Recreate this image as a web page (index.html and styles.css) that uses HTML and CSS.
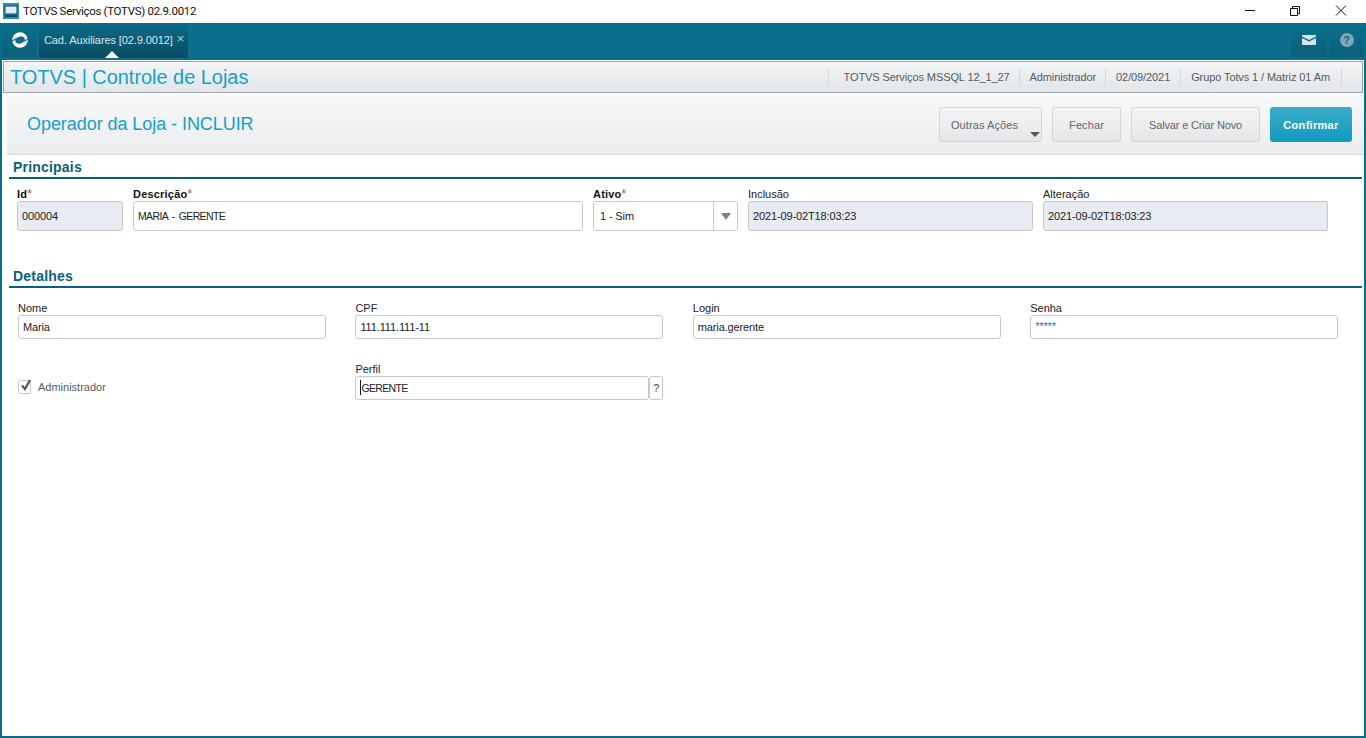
FILE: index.html
```html
<!DOCTYPE html>
<html lang="pt-BR">
<head>
<meta charset="utf-8">
<title>TOTVS Serviços (TOTVS) 02.9.0012</title>
<link rel="stylesheet" href="styles.css">
</head>
<body>
<header class="titlebar">
  <svg class="app-icon" width="16" height="16" viewBox="0 0 16 16"><rect width="16" height="16" fill="#2a8fb0"/><rect x="2" y="3" width="12" height="8" fill="#dfeef4" stroke="#0b4a60"/><rect x="2" y="12" width="12" height="2" fill="#0b4a60"/></svg>
  <span class="title-text">TOTVS Serviços (TOTVS) 02.9.0012</span>
  <div class="win-controls">
    <svg class="win-btn" width="46" height="23" viewBox="0 0 46 23"><path d="M18 10.5h10" stroke="#111" fill="none"/></svg>
    <svg class="win-btn" width="46" height="23" viewBox="0 0 46 23"><path d="M18.5 8.5h7v7h-7zM20.5 8.5v-2h7v7h-2" stroke="#111" fill="none"/></svg>
    <svg class="win-btn" width="46" height="23" viewBox="0 0 46 23"><path d="M18 5.5l10 10M28 5.5l-10 10" stroke="#111" fill="none"/></svg>
  </div>
</header>
<div class="shell">
  <nav class="topbar">
    <div class="logo-tab">
      <svg width="18" height="18" viewBox="0 0 18 18"><circle cx="9" cy="9" r="7.800" fill="#fff"/><ellipse cx="9" cy="9" rx="5" ry="3.500" transform="rotate(-22 9 9)" fill="#0b6f8c"/><path d="M1 10L5.500 7.500M17 8L12.500 10.500" stroke="#0b6f8c" stroke-width="1.100" fill="none"/></svg>
    </div>
    <div class="tab">
      <span class="tab-label">Cad. Auxiliares [02.9.0012]</span>
      <span class="tab-close">×</span>
      <span class="tab-caret"></span>
    </div>
    <div class="top-icons">
      <div class="top-icon">
        <svg width="14" height="10" viewBox="0 0 14 10"><path d="M1 0h12a1 1 0 0 1 1 1v.5L7 5 0 1.500V1a1 1 0 0 1 1-1zM0 3L7 6.500 14 3v6a1 1 0 0 1-1 1H1a1 1 0 0 1-1-1z" fill="#d3e6ee"/></svg>
      </div>
      <div class="top-icon top-icon-help">
        <span class="help-glyph">?</span>
      </div>
    </div>
  </nav>
  <div class="appbar">
    <h1 class="app-title">TOTVS | Controle de Lojas</h1>
    <ul class="app-info">
      <li>TOTVS Serviços MSSQL 12_1_27</li>
      <li>Administrador</li>
      <li>02/09/2021</li>
      <li>Grupo Totvs 1 / Matriz 01 Am</li>
    </ul>
  </div>
  <main class="content">
    <div class="pagehead">
      <h2 class="page-title">Operador da Loja - INCLUIR</h2>
      <div class="actions">
        <button class="btn btn-menu">Outras Ações<span class="btn-caret"></span></button>
        <button class="btn btn-close">Fechar</button>
        <button class="btn btn-new">Salvar e Criar Novo</button>
        <button class="btn btn-primary">Confirmar</button>
      </div>
    </div>
    <section class="section section-main">
      <h3 class="section-title">Principais</h3>
      <div class="row-main">
        <div class="field f-id"><label class="lbl req">Id<em>*</em></label><div class="input tall disabled">000004</div></div>
        <div class="field f-desc"><label class="lbl req">Descrição<em>*</em></label><div class="input tall caps">MARIA - GERENTE</div></div>
        <div class="field f-ativo"><label class="lbl req">Ativo<em>*</em></label><div class="input tall select"><span class="select-val">1 - Sim</span><span class="select-arrow"><i></i></span></div></div>
        <div class="field f-date"><label class="lbl">Inclusão</label><div class="input tall disabled">2021-09-02T18:03:23</div></div>
        <div class="field f-date"><label class="lbl">Alteração</label><div class="input tall disabled">2021-09-02T18:03:23</div></div>
      </div>
    </section>
    <section class="section section-detail">
      <h3 class="section-title">Detalhes</h3>
      <div class="grid-detail">
        <div class="field"><label class="lbl">Nome</label><div class="input">Maria</div></div>
        <div class="field"><label class="lbl">CPF</label><div class="input">111.111.111-11</div></div>
        <div class="field"><label class="lbl">Login</label><div class="input">maria.gerente</div></div>
        <div class="field"><label class="lbl">Senha</label><div class="input pass">*****</div></div>
        <div class="check">
          <span class="checkbox"><svg width="14" height="14" viewBox="0 0 14 14"><path d="M3 6.500l3 3.500 5-9" fill="none" stroke="#4a5568" stroke-width="2.200"/></svg></span>
          <span class="check-label">Administrador</span>
        </div>
        <div class="field">
          <label class="lbl">Perfil</label>
          <div class="lookup">
            <div class="input lookup-input caps"><span class="caret"></span>GERENTE</div>
            <div class="lookup-btn">?</div>
          </div>
        </div>
      </div>
    </section>
  </main>
</div>
</body>
</html>
```
FILE: styles.css
```css
* { box-sizing: border-box; }
html, body { margin: 0; padding: 0; height: 738px; overflow: hidden; background: #fff; }
body { font-family: "Liberation Sans", Arial, sans-serif; font-size: 11px; color: #222; }
h1, h2, h3, ul { margin: 0; padding: 0; font-weight: normal; }

.titlebar { height: 23px; display: flex; align-items: center; background: #fff; padding-left: 3px; }
.app-icon { margin-right: 4px; margin-top: -1px; }
.title-text { font-family: Roboto, "Liberation Sans", sans-serif; font-size: 11.5px; letter-spacing: -0.3px; color: #111; margin-top: -1px; }
.win-controls { margin-left: auto; display: flex; }
.win-btn { display: block; margin-left: -1px; }
.win-btn:last-child { margin-left: 0; margin-right: 2px; }

.shell { height: 715px; border: 2px solid #0b6f8c; border-top: 0; display: flex; flex-direction: column; background: #fff; }

.topbar { height: 37px; flex: none; background: #0b6f8c; display: flex; position: relative; }
.logo-tab { width: 35px; height: 34px; display: flex; align-items: center; justify-content: center; padding-bottom: 1px; background: linear-gradient(#0b6f8c, #0a6079); margin-right: 2px; }
.tab { width: 149px; height: 35px; background: linear-gradient(#0b6d88, #094a5f); position: relative; padding-left: 5px; display: flex; align-items: center; padding-bottom: 2px; color: #d7e6ec; }
.tab-label { font-size: 11px; white-space: nowrap; letter-spacing: -0.1px; }
.tab-close { margin-left: 4px; font-size: 13px; color: #b4ccd6; line-height: 11px; margin-top: -3px; }
.tab-caret { position: absolute; left: 66px; bottom: 0; width: 0; height: 0; border-left: 7px solid transparent; border-right: 7px solid transparent; border-bottom: 7px solid #f4f6f7; }
.top-icons { margin-left: auto; display: flex; gap: 2px; }
.top-icon { width: 36px; height: 34px; background: linear-gradient(#0b6f8c, #0a6079); display: flex; align-items: center; justify-content: center; padding-bottom: 1px; }
.top-icon-help { width: 35px; }
.help-glyph { width: 14px; height: 14px; border-radius: 50%; background: #7fa8b8; color: #0b6c88; font-weight: bold; font-size: 11px; line-height: 14px; text-align: center; }

.appbar { height: 34px; flex: none; display: flex; align-items: center; justify-content: space-between; background: linear-gradient(#f3f5f6, #e2e5e9); border: 1px solid #fff; box-shadow: inset 0 0 0 1px #a0a4a7; padding: 0 21px 0 7px; }
.app-title { font-size: 20px; color: #16a0c8; line-height: 26px; letter-spacing: -0.04px; }
.app-info { display: flex; list-style: none; height: 18px; border-right: 1px solid #d5d7d9; }
.app-info li { padding: 0 10px; border-left: 1px solid #d5d7d9; line-height: 18px; color: #555a60; font-size: 11px; letter-spacing: -0.1px; }
.app-info li:first-child { padding: 0 9px 0 15px; }
.app-info li:nth-child(2) { padding-right: 9px; }
.app-info li:last-child { padding-right: 11px; }

.content { flex: 1; }
.pagehead { margin-left: 5px; height: 61px; border-bottom: 1px solid #d8d9da; background: linear-gradient(#f7f8f8, #ebecee); display: flex; align-items: center; justify-content: space-between; padding: 0 12px 0 20px; }
.page-title { font-size: 18px; color: #16a0c8; letter-spacing: -0.06px; }
.actions { display: flex; gap: 10px; margin-top: 1px; }
.btn { height: 35px; font-family: "Liberation Sans", Arial, sans-serif; font-size: 11px; color: #62666c; border: 1px solid #d3d4d6; border-radius: 3px; background: linear-gradient(#f4f4f5, #e6e6e8); padding: 0; position: relative; letter-spacing: 0.1px; }
.btn-menu { width: 103px; padding-right: 12px; }
.btn-close { width: 69px; }
.btn-new { width: 129px; letter-spacing: -0.16px; }
.btn-primary { width: 82px; border: 0; color: #fff; font-weight: bold; background: linear-gradient(#3aacc9, #129ac0); letter-spacing: 0.3px; }
.btn-caret { position: absolute; right: 1px; bottom: 4px; width: 0; height: 0; border-left: 5px solid transparent; border-right: 5px solid transparent; border-top: 5px solid #53585e; }

.section-title { font-size: 14px; font-weight: bold; color: #0a6079; height: 24px; line-height: 25px; margin-left: 7px; padding-left: 4px; border-bottom: 2px solid #0a6079; letter-spacing: 0.2px; margin-right: 2px; }
.section-detail { margin-top: 33px; }

.row-main { display: flex; gap: 10px; padding: 8px 0 0 15px; }
.f-id { width: 106px; }
.f-desc { width: 450px; }
.f-ativo { width: 145px; }
.f-date { width: 285px; }
.lbl { display: block; height: 14px; line-height: 15px; font-size: 11px; color: #222; }
.lbl.req { font-weight: bold; color: #111; letter-spacing: 0.2px; }
.lbl em { color: #e0333c; font-style: normal; font-weight: normal; font-size: 12px; }
.input { height: 24px; line-height: 22px; border: 1px solid #c8c9cb; border-radius: 3px; background: #fff; padding-left: 4px; font-size: 11px; color: #222; letter-spacing: -0.13px; }
.input.tall { height: 30px; line-height: 28px; }
.input.disabled { background: #e8ebf2; }
.input.caps { font-size: 10.5px; letter-spacing: -0.65px; word-spacing: 2px; }
.input.pass { color: #2d6ea5; line-height: 20px; }
.select { display: flex; padding-right: 0; justify-content: space-between; padding-left: 6px; }
.select-arrow { width: 24px; margin: 0; border-left: 1px solid #c8c9cb; display: flex; align-items: center; justify-content: center; }
.select-arrow i { width: 0; height: 0; border-left: 5px solid transparent; border-right: 5px solid transparent; border-top: 7px solid #7c8287; }

.grid-detail { display: grid; grid-template-columns: repeat(4, 308px); column-gap: 29.4px; row-gap: 23px; padding: 13px 0 0 16px; }
.grid-detail .lbl { height: 14px; line-height: 14px; }
.grid-detail .field { height: 38px; }
.check { display: flex; align-items: center; height: 38px; padding-top: 12px; gap: 8px; }
.checkbox { width: 13px; height: 14px; border: 1px solid #c8c9cb; border-radius: 2px; display: block; background: #fff; position: relative; }
.checkbox svg { position: absolute; left: 0; top: -2px; }
.check-label { color: #555a60; margin-left: -1px; }
.lookup { display: flex; }
.lookup-input { flex: 1; padding-left: 5px; position: relative; }
.caret { position: absolute; left: 4px; top: 3px; width: 1px; height: 15px; background: #111; }
.lookup-btn { width: 14px; height: 24px; line-height: 22px; text-align: center; border: 1px solid #c8c9cb; border-radius: 3px; color: #444; }
```
